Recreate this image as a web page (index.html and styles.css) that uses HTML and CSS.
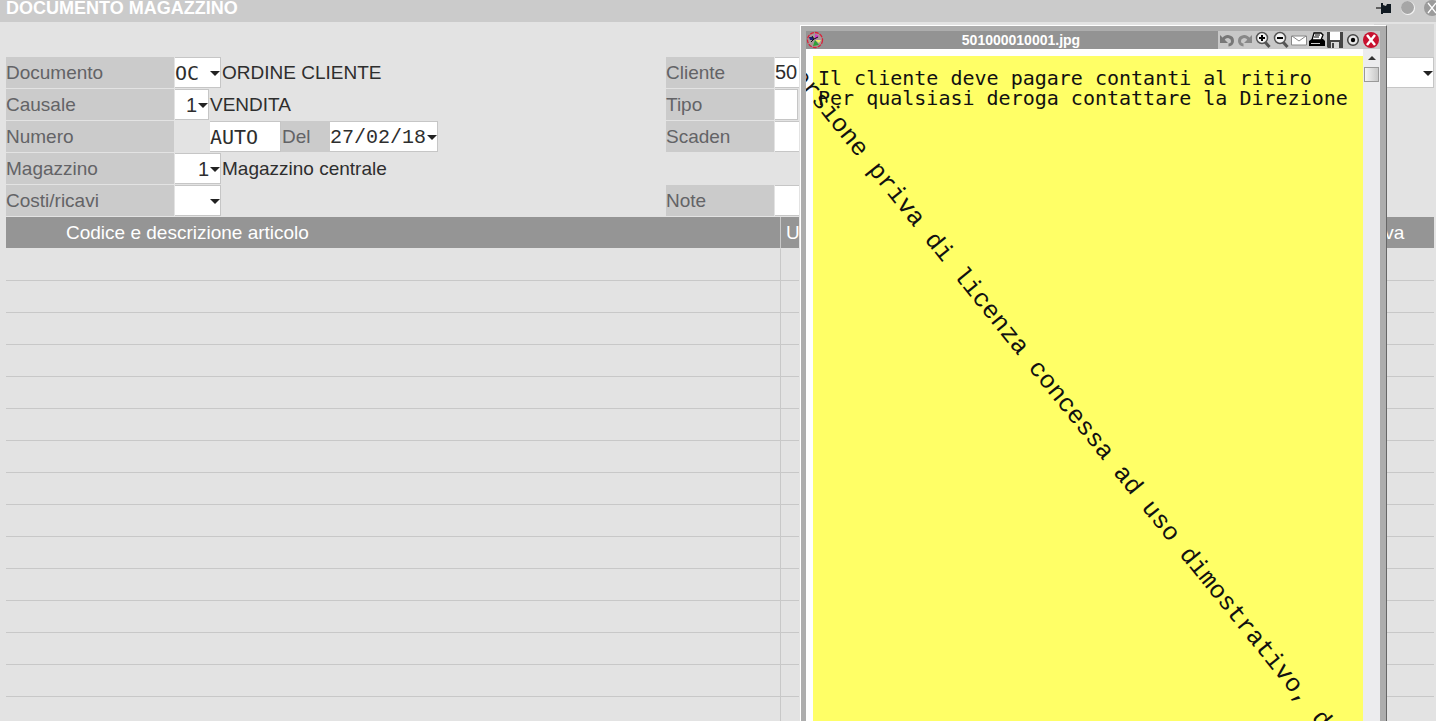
FILE: index.html
```html
<!DOCTYPE html>
<html lang="it">

<head>
    <meta charset="UTF-8">
    <meta name="viewport" content="width=device-width, initial-scale=1.0">

    <title>Documento magazzino</title>
    <link rel="stylesheet" href="styles.css">
</head>

<body>
    <div class="page">
        <header class="topbar">
            <h1>DOCUMENTO MAGAZZINO</h1>
            <div class="topbar-btns">
                <button type="button" aria-label="Blocca">
                    <svg width="16" height="14" viewBox="0 0 16 14"><path d="M0 7h6" stroke="#333" stroke-width="1.4"/><path d="M5 2h2v2l3 1 1-2h4v9H7v1H5z" fill="#111a22"/></svg>
                </button>
                <button type="button" aria-label="Riduci">
                    <svg width="16" height="16" viewBox="0 0 16 16"><circle cx="8" cy="8" r="7" fill="#f4f4f4"/><circle cx="7.5" cy="7.5" r="6.5" fill="#a6a6a6"/></svg>
                </button>
                <button type="button" aria-label="Chiudi">
                    <svg width="16" height="16" viewBox="0 0 16 16"><circle cx="8" cy="8" r="8" fill="#9b9b9b"/><path d="M4 3l8 10M12 3L4 13" stroke="#fff" stroke-width="1.3"/></svg>
                </button>
            </div>
        </header>

        <div class="band"></div>

        <!-- testata -->
        <form class="testata">
            <div class="col-left">
                <div class="row">
                    <label class="lbl" for="documento">Documento</label>
                    <span class="combo w-m"><select id="documento" class="mono"><option>OC</option></select></span>
                    <span class="desc">ORDINE CLIENTE</span>
                </div>
                <div class="row">
                    <label class="lbl" for="causale">Causale</label>
                    <span class="combo w-s"><select id="causale" class="num"><option>1</option></select></span>
                    <span class="desc">VENDITA</span>
                </div>
                <div class="row">
                    <label class="lbl numero" for="numero">Numero</label>
                    <input id="numero" class="mono w-l" type="text" value="AUTO">
                    <label class="lbl del" for="del">Del</label>
                    <span class="combo w-date"><input id="del" class="date" type="text" value="27/02/18"></span>
                </div>
                <div class="row">
                    <label class="lbl" for="magazzino">Magazzino</label>
                    <span class="combo w-m"><select id="magazzino" class="num"><option>1</option></select></span>
                    <span class="desc">Magazzino centrale</span>
                </div>
                <div class="row">
                    <label class="lbl" for="costi">Costi/ricavi</label>
                    <span class="combo w-m"><select id="costi"><option></option></select></span>
                </div>
            </div>
            <div class="col-right">
                <div class="row">
                    <label class="lbl" for="cliente">Cliente</label>
                    <input id="cliente" class="w-date" type="text" value="50">
                    <span class="combo last"><select aria-label="Sede"><option></option></select></span>
                </div>
                <div class="row">
                    <label class="lbl" for="tipo">Tipo</label>
                    <input id="tipo" class="w-xs" type="text">
                </div>
                <div class="row">
                    <label class="lbl" for="scaden">Scaden</label>
                    <input id="scaden" class="w-date" type="text">
                </div>
                <div class="row"></div>
                <div class="row">
                    <label class="lbl" for="note">Note</label>
                    <input id="note" class="w-date" type="text">
                </div>
            </div>
        </form>

        <!-- righe -->
        <table class="righe">
            <thead>
                <tr><th class="c-art">Codice e descrizione articolo</th><th class="c-um">U</th><th class="c-iva">Iva</th></tr>
            </thead>
            <tbody>
                <tr><td></td><td></td><td></td></tr>
                <tr><td></td><td></td><td></td></tr>
                <tr><td></td><td></td><td></td></tr>
                <tr><td></td><td></td><td></td></tr>
                <tr><td></td><td></td><td></td></tr>
                <tr><td></td><td></td><td></td></tr>
                <tr><td></td><td></td><td></td></tr>
                <tr><td></td><td></td><td></td></tr>
                <tr><td></td><td></td><td></td></tr>
                <tr><td></td><td></td><td></td></tr>
                <tr><td></td><td></td><td></td></tr>
                <tr><td></td><td></td><td></td></tr>
                <tr><td></td><td></td><td></td></tr>
                <tr><td></td><td></td><td></td></tr>
                <tr><td></td><td></td><td></td></tr>
            </tbody>
        </table>

        <!-- finestra immagine -->
        <section class="popup">
            <div class="popup-bar">
                <svg class="logo" width="18" height="18" viewBox="0 0 18 18">
                    <circle cx="9" cy="9" r="7.5" fill="#a89a98" stroke="#d8203a" stroke-width="1.3" stroke-dasharray="4 1"/>
                    <path d="M9 9V3l4 2z" fill="#d33ad0"/><path d="M3 6h4v3H4z" fill="#1b1f7a"/>
                    <path d="M9 9h6l-2 3z" fill="#f2ee6a"/><path d="M9 9l4 5-6 1z" fill="#2fa036"/>
                    <path d="M5 11l3-3M6 5l2 3M8 8l4-2" stroke="#111"/>
                </svg>
                <h2>501000010001.jpg</h2>
                <div class="tools">
                    <button type="button" aria-label="Annulla"><svg width="18" height="18" viewBox="0 0 18 18"><path d="M5 8.5C8 4 14.500 5 14.500 10c0 2.500-2 4-4 4" fill="none" stroke="#777" stroke-width="3"/><path d="M2 4v8h8z" fill="#777"/></svg></button>
                    <button type="button" aria-label="Ripeti"><svg width="18" height="18" viewBox="0 0 18 18"><path d="M13 8.5C10 4 3.500 5 3.500 10c0 2.500 2 4 4 4" fill="none" stroke="#888" stroke-width="3"/><path d="M16 4v8H8z" fill="#888"/></svg></button>
                    <button type="button" aria-label="Ingrandisci"><svg width="18" height="18" viewBox="0 0 18 18"><path d="M11 11l4.500 5" stroke="#555" stroke-width="3"/><circle cx="8" cy="7" r="5.500" fill="#f4f4f4" stroke="#555" stroke-width="1.500"/><path d="M5 7h6M8 4v6" stroke="#000" stroke-width="2"/></svg></button>
                    <button type="button" aria-label="Riduci"><svg width="18" height="18" viewBox="0 0 18 18"><path d="M11 11l4.500 5" stroke="#555" stroke-width="3"/><circle cx="8" cy="7" r="5.500" fill="#f4f4f4" stroke="#555" stroke-width="1.500"/><path d="M5 7h6" stroke="#000" stroke-width="2"/></svg></button>
                    <button type="button" aria-label="Invia"><svg width="18" height="18" viewBox="0 0 18 18"><path d="M1.500 5h15v9h-15z" fill="#fff" stroke="#888"/><path d="M2 5l7 5 7-5" fill="none" stroke="#888"/></svg></button>
                    <button type="button" aria-label="Stampa"><svg width="18" height="18" viewBox="0 0 18 18"><path d="M1 10l3-2h11l2 2v5H1z"/><path d="M6 2h7l2 2-2 5H4z" fill="#fff" stroke="#000" stroke-width="1.300"/><path d="M7 4h5M6 6h5" stroke="#000"/><path d="M3 12.500h9" stroke="#ccc"/></svg></button>
                    <button type="button" aria-label="Salva"><svg width="18" height="18" viewBox="0 0 18 18"><path d="M1 1h16v16H2l-1-1z" fill="#444"/><path d="M4 1h10v8H4z" fill="#fff"/><path d="M5 11h8v6H5z" fill="#d8d8d8"/><path d="M6 12h2v5H6z" fill="#444"/></svg></button>
                    <button type="button" aria-label="Centra"><svg width="18" height="18" viewBox="0 0 18 18"><circle cx="9" cy="9" r="5.300" fill="#e8e8e8" stroke="#444" stroke-width="1.500"/><circle cx="9" cy="9" r="2.200"/></svg></button>
                    <button type="button" aria-label="Chiudi"><svg width="18" height="18" viewBox="0 0 18 18"><circle cx="9" cy="9" r="8" fill="#c8102e"/><path d="M5 4l8 10M13 4L5 14" stroke="#fff" stroke-width="2.500"/></svg></button>
                </div>
            </div>
            <div class="popup-body">
                <div class="note">
                    <p>Il cliente deve pagare contanti al ritiro</p>
                    <p>Per qualsiasi deroga contattare la Direzione</p>
                </div>
                <div class="scroll">
                    <button type="button" aria-label="Su"><svg width="8" height="4" viewBox="0 0 8 4"><path d="M0 4l4-4 4 4z" fill="#333"/></svg></button>
                    <div class="thumb"></div>
                </div>
                <div class="watermark">Versione priva di licenza concessa ad uso dimostrativo, d</div>
            </div>
        </section>
    </div>
</body>

</html>
```
FILE: styles.css
```css
* {
    margin: 0;
    padding: 0;
    box-sizing: border-box;
}

body {
    font-family: "Liberation Sans", Arial, sans-serif;
    font-size: 19px;
    color: #2e2e2e;
    background: #e3e3e3;
}

.page {
    position: relative;
    height: 100vh;
    overflow: hidden;
}

button {
    border: 0;
    background: none;
    display: flex;
    align-items: center;
    justify-content: center;
}

/* barra titolo */
.topbar {
    display: flex;
    justify-content: space-between;
    height: 22px;
    padding-left: 6px;
    background: #cbcbcb;
}

.topbar h1 {
    font-size: 18px;
    line-height: 16px;
    color: #fff;
}

.topbar-btns {
    display: flex;
    height: 16px;
    gap: 8px;
    margin-right: -4px;
}

.band {
    height: 33px;
    width: 60px;
    margin: 2px 2px 0 auto;
    background: #d4d4d4;
}

/* testata */
.testata {
    display: flex;
    padding: 0 2px 0 6px;
}

.col-left {
    width: 660px;
}

.col-right {
    flex: 1;
}

.row {
    display: flex;
    height: 32px;
    padding-bottom: 1px;
    line-height: 31px;
}

.lbl {
    width: 168px;
    margin-right: 1px;
    color: #636366;
    background: #cbcbcb;
}

.col-right .lbl {
    width: 108px;
}

.lbl.numero {
    margin-right: 36px;
}

.lbl.del {
    width: 49px;
    margin-right: 0;
    padding-left: 1px;
}

.desc {
    padding-left: 1px;
}

input,
select {
    height: 31px;
    font-family: inherit;
    font-size: 20px;
    color: #2e2e2e;
    background: #fff;
    border: 1px solid #c6c6c6;
    border-left: 0;
    border-radius: 0;
    appearance: none;
    outline: none;
}

.combo {
    position: relative;
}

.combo select,
.combo input {
    width: 100%;
    display: block;
}

.combo::after {
    content: "";
    position: absolute;
    right: 1px;
    top: 14px;
    border: 5px solid transparent;
    border-top-color: #222;
    border-bottom: 0;
}

.mono {
    font-family: "DejaVu Sans Mono", monospace;
}

.date {
    padding-top: 2px;
    font-family: "Liberation Mono", monospace;
}

.num {
    padding-right: 11px;
    text-align-last: right;
}

.w-xs { width: 23px; }
.w-s { width: 34px; }
.w-m { width: 46px; }
.w-l { width: 71px; }
.w-date { width: 108px; }

.combo.last {
    width: 60px;
    margin-left: auto;
}

/* righe */
.righe {
    width: calc(100% - 8px);
    margin-left: 6px;
    table-layout: fixed;
    border-collapse: separate;
    border-spacing: 0;
}

.righe th {
    height: 32px;
    font-weight: normal;
    text-align: left;
    color: #fff;
    background: #959595;
    border-bottom: 1px solid #e3e3e3;
}

.righe td {
    height: 32px;
    border-bottom: 1px solid #c8c8c8;
}

.righe th:first-child,
.righe td:first-child {
    border-right: 1px solid #c8c8c8;
}

.righe .c-art {
    width: 775px;
    padding-left: 60px;
}

.righe .c-um {
    padding-left: 5px;
}

.righe .c-iva {
    width: 55px;
}

/* finestra immagine */
.popup {
    position: absolute;
    top: 25px;
    right: 49px;
    bottom: 0;
    width: 587px;
    display: flex;
    flex-direction: column;
    border: solid #fff;
    border-width: 1px 0 0 1px;
    border-right: 1px solid #666;
    box-shadow: inset 0 5px #adadad, inset 5px 0 #adadad, inset -6px 0 #adadad, -1px 0 #e3e3e3;
    padding: 5px 6px 0 5px;
}

.popup-bar {
    display: flex;
    height: 18px;
    background: #939393;
}

.popup-bar h2 {
    flex: 1;
    font-size: 14px;
    line-height: 18px;
    text-align: center;
    color: #fff;
}

.tools {
    display: flex;
    background: #c8c8c8;
}

.popup-body {
    position: relative;
    flex: 1;
    display: flex;
    overflow: hidden;
    background: #fff;
}

.note {
    flex: 1;
    margin: 7px 0 0 7px;
    padding: 12px 0 0 5px;
    font-family: "DejaVu Sans Mono", monospace;
    font-size: 20px;
    line-height: 20px;
    white-space: nowrap;
    color: #111;
    background: #ffff66;
}

.scroll {
    width: 17px;
    background: #ececee;
}

.scroll button {
    width: 17px;
    height: 18px;
}

.thumb {
    width: 15px;
    height: 15px;
    margin: 0 1px;
    border: 1px solid #999;
    background: linear-gradient(90deg, #f4f4f4, #c8c8c8);
}

.watermark {
    position: absolute;
    left: -19px;
    top: -3px;
    font-family: "Liberation Mono", monospace;
    font-size: 25px;
    line-height: 30px;
    white-space: nowrap;
    color: #111;
    transform: rotate(51deg);
    transform-origin: 0 50%;
}
```
